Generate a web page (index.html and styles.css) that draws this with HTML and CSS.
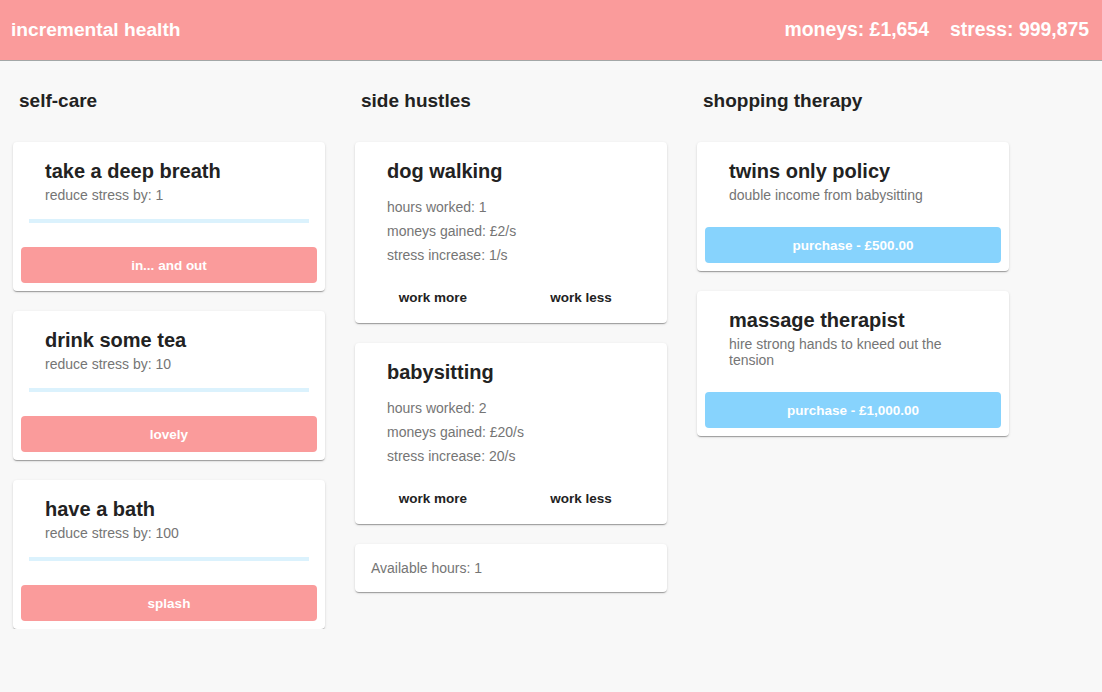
FILE: index.html
```html
<!DOCTYPE html>
<html>
<head>
<meta charset="utf-8">
<title>incremental health</title>
<link rel="stylesheet" href="styles.css">
</head>
<body>
<header class="topbar">
  <div class="brand">incremental health</div>
  <div class="stats">
    <span>moneys: £1,654</span>
    <span>stress: 999,875</span>
  </div>
</header>
<main class="board">
  <section class="column">
    <h2 class="column-title">self-care</h2>
    <div class="card">
      <div class="card-head">
        <div class="card-title">take a deep breath</div>
        <div class="card-sub">reduce stress by: 1</div>
      </div>
      <div class="progress"></div>
      <button class="btn btn-pink">in... and out</button>
    </div>
    <div class="card">
      <div class="card-head">
        <div class="card-title">drink some tea</div>
        <div class="card-sub">reduce stress by: 10</div>
      </div>
      <div class="progress"></div>
      <button class="btn btn-pink">lovely</button>
    </div>
    <div class="card">
      <div class="card-head">
        <div class="card-title">have a bath</div>
        <div class="card-sub">reduce stress by: 100</div>
      </div>
      <div class="progress"></div>
      <button class="btn btn-pink">splash</button>
    </div>
  </section>
  <section class="column">
    <h2 class="column-title">side hustles</h2>
    <div class="card">
      <div class="card-head">
        <div class="card-title">dog walking</div>
        <ul class="facts">
          <li>hours worked: 1</li>
          <li>moneys gained: £2/s</li>
          <li>stress increase: 1/s</li>
        </ul>
      </div>
      <div class="actions">
        <button class="text-btn">work more</button>
        <button class="text-btn">work less</button>
      </div>
    </div>
    <div class="card">
      <div class="card-head">
        <div class="card-title">babysitting</div>
        <ul class="facts">
          <li>hours worked: 2</li>
          <li>moneys gained: £20/s</li>
          <li>stress increase: 20/s</li>
        </ul>
      </div>
      <div class="actions">
        <button class="text-btn">work more</button>
        <button class="text-btn">work less</button>
      </div>
    </div>
    <div class="card card-plain">Available hours: 1</div>
  </section>
  <section class="column">
    <h2 class="column-title">shopping therapy</h2>
    <div class="card">
      <div class="card-head">
        <div class="card-title">twins only policy</div>
        <div class="card-sub">double income from babysitting</div>
      </div>
      <button class="btn btn-blue btn-shop">purchase - £500.00</button>
    </div>
    <div class="card">
      <div class="card-head">
        <div class="card-title">massage therapist</div>
        <div class="card-sub">hire strong hands to kneed out the tension</div>
      </div>
      <button class="btn btn-blue btn-shop">purchase - £1,000.00</button>
    </div>
  </section>
</main>
</body>
</html>
```
FILE: styles.css
```css
* { box-sizing: border-box; }
html, body {
  margin: 0;
  padding: 0;
  background: #f8f8f8;
  font-family: "Liberation Sans", Arial, Helvetica, sans-serif;
  color: #222;
}
.topbar {
  height: 61px;
  background: #fa9b9b;
  border-bottom: 1px solid #a3a7a7;
  display: flex;
  align-items: center;
  justify-content: space-between;
  padding: 0 13px 1px 11px;
  color: #fff;
  font-size: 19.2px;
  font-weight: bold;
}
.stats {
  display: flex;
  gap: 21px;
  font-size: 19.4px;
}
.board {
  display: grid;
  grid-template-columns: repeat(3, 312px);
  column-gap: 30px;
  padding: 28px 13px 0;
  align-items: start;
}
.column {
  display: flex;
  flex-direction: column;
  gap: 20px;
}
.column-title {
  margin: 0 0 9px;
  padding-left: 6px;
  font-size: 19px;
  line-height: 24px;
  font-weight: bold;
  color: #222;
}
.card {
  background: #fff;
  border-radius: 4px;
  box-shadow: 0 2px 1px -1px rgba(0,0,0,.2), 0 1px 1px 0 rgba(0,0,0,.14), 0 1px 3px 0 rgba(0,0,0,.12);
  padding: 17px 0 8px;
  display: flex;
  flex-direction: column;
}
.card-head {
  padding: 0 32px;
}
.card-title {
  font-size: 20px;
  line-height: 24px;
  font-weight: bold;
  color: #222;
}
.card-sub {
  margin-top: 4px;
  font-size: 14px;
  line-height: 16px;
  color: #757575;
}
.progress {
  height: 4px;
  margin: 16px 16px 0;
  background: #dbf2fd;
}
.btn {
  margin: 24px 8px 0;
  height: 36px;
  border: 0;
  border-radius: 4px;
  color: #fff;
  font-family: inherit;
  font-size: 13.5px;
  font-weight: bold;
  padding: 0;
}
.btn-pink { background: #fa9b9b; }
.btn-blue { background: #87d3fd; }
.facts {
  list-style: none;
  margin: 12px 0 0;
  padding: 0;
  font-size: 14px;
  line-height: 24px;
  color: #757575;
}
.actions {
  display: grid;
  grid-template-columns: 148px 148px;
  margin-top: 12px;
  padding: 0 4px;
}
.text-btn {
  height: 36px;
  background: transparent;
  border: 0;
  font-family: inherit;
  font-size: 13.5px;
  font-weight: bold;
  color: #222;
  padding: 0;
}
.card-plain {
  display: block;
  padding: 0 16px;
  height: 48px;
  line-height: 48px;
  font-size: 14px;
  color: #757575;
}
```
